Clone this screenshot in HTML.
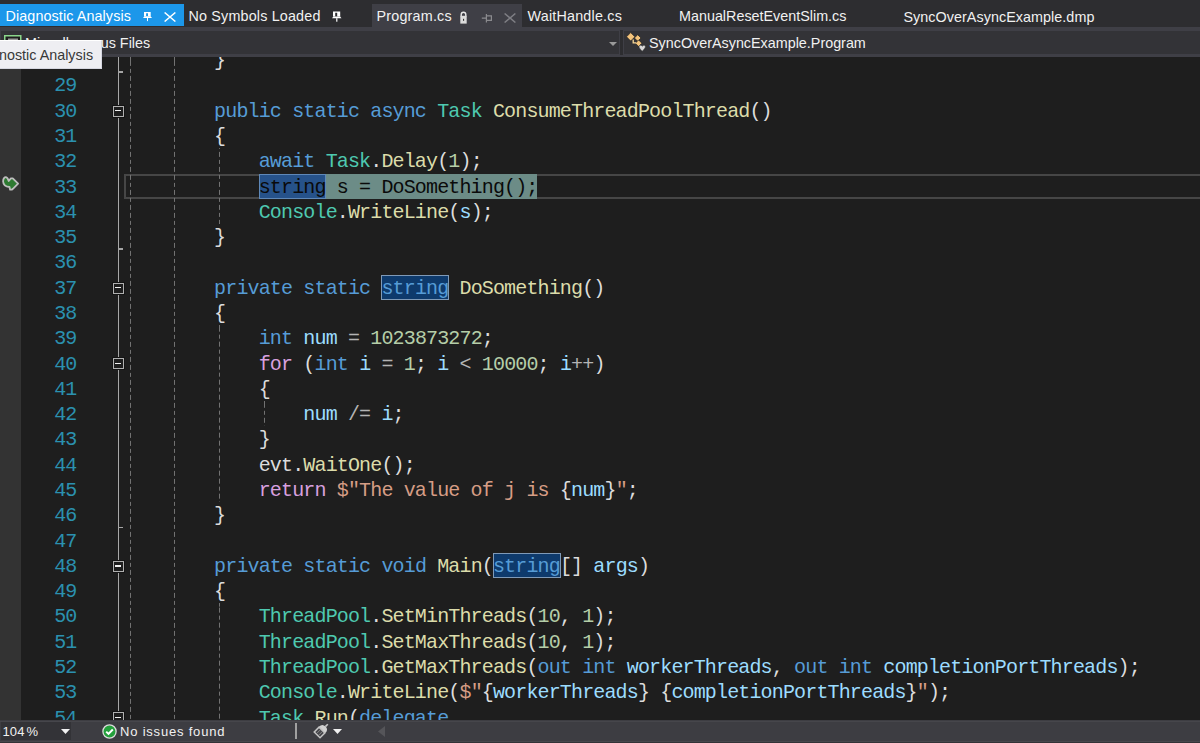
<!DOCTYPE html>
<html><head><meta charset="utf-8">
<style>
html,body{margin:0;padding:0;width:1200px;height:743px;overflow:hidden;background:#2D2D30;font-family:"Liberation Sans",sans-serif;}
.abs{position:absolute}
#tabs{position:absolute;left:0;top:0;width:1200px;height:27px;background:#2D2D30}
.tt{position:absolute;top:8px;font-size:14.35px;color:#F1F1F1;white-space:nowrap;line-height:16px;transform:scaleY(1.07);transform-origin:0 13px}
.st{transform:none}
#nav{position:absolute;left:0;top:27px;width:1200px;height:30px;background:#3F3F46}
#editor{position:absolute;left:0;top:57px;width:1200px;height:663px;background:#1E1E1E;overflow:hidden}
#margin{position:absolute;left:0;top:0;width:21px;height:100%;background:#333333}
#ed{position:absolute;left:0;top:-57px;width:1200px;height:743px}
.ln{position:absolute;left:124.9px;height:25.29px;line-height:25.29px;font-family:"Liberation Mono",monospace;font-size:20px;letter-spacing:-0.85px;white-space:pre;color:#DCDCDC;transform:translateY(1.3px) scaleY(1.04);transform-origin:0 18px}
.num{position:absolute;left:21px;width:55.5px;text-align:right;height:25.29px;line-height:25.29px;font-family:"Liberation Mono",monospace;font-size:20px;letter-spacing:-0.85px;color:#2B91AF;transform:translateY(1.3px) scaleY(1.04);transform-origin:0 18px}
.g{position:absolute;width:1px;background-image:repeating-linear-gradient(to bottom,#727272 0,#727272 4.6px,transparent 4.6px,transparent 7.6px)}
.ov{position:absolute;left:117.6px;width:1.4px;background:#A8A8A8}
.ot{position:absolute;left:118px;width:5px;height:1.5px;background:#A5A5A5}
.ob{position:absolute;left:112.8px;width:11.2px;height:11px;box-sizing:border-box;border:1.5px solid #B0B0B0;background:#1E1E1E;box-shadow:0 0 0 1px #141414}
.ob:after{content:"";position:absolute;left:0.8px;top:3.6px;width:6.4px;height:1.4px;background:#F0F0F0}
#status{position:absolute;left:0;top:720px;width:1200px;height:23px;background:#3D3D42}
</style></head><body>
<div id="tabs">
  <div class="abs" style="left:0;top:4px;width:184px;height:22px;background:#1C97EA"></div>
  <div class="tt" style="left:5.5px;top:7.5px;color:#FFFFFF;letter-spacing:0.1px">Diagnostic Analysis</div>
  <svg class="abs" style="left:142px;top:10px" width="12" height="12" viewBox="0 0 12 12"><path fill-rule="evenodd" d="M2 2H8.7V6.3H2zM4.1 3.2V6.3H6V3.2z" fill="#fff"/><path d="M1.1 7.9L2.2 6.3H8.6L10 7.9z" fill="#fff"/><rect x="5" y="7.9" width="1" height="3.2" fill="#fff"/></svg>
  <svg class="abs" style="left:164px;top:11.5px" width="12" height="10" viewBox="0 0 12 10"><path d="M0.6 0.5L11.4 9.5M11.4 0.5L0.6 9.5" stroke="#fff" stroke-width="1.5" fill="none"/></svg>

  <div class="tt" style="left:188.5px;letter-spacing:0.17px">No Symbols Loaded</div>
  <svg class="abs" style="left:330.7px;top:10px" width="12" height="12" viewBox="0 0 12 12"><path fill-rule="evenodd" d="M2 1.4H9.2V6.4H2zM4.2 2.8V6.4H6.2V2.8z" fill="#fff"/><path d="M1.1 8.2L2.2 6.4H9.1L10.5 8.2z" fill="#fff"/><rect x="5.2" y="8.2" width="1.2" height="3.5" fill="#fff"/></svg>

  <div class="abs" style="left:372px;top:4px;width:150px;height:23px;background:#3F3F46"></div>
  <div class="tt" style="left:376.5px;letter-spacing:0.2px">Program.cs</div>
  <svg class="abs" style="left:459.5px;top:11px" width="7" height="13" viewBox="0 0 7 13"><path d="M1.2 5.5V3.6a2.3 2.3 0 0 1 4.6 0V5.5" stroke="#E8E8E8" stroke-width="1.4" fill="none"/><rect x="0.3" y="4.8" width="6.4" height="7.8" fill="#DCDCDC"/><rect x="3" y="7.8" width="1.1" height="2" fill="#333"/></svg>
  <svg class="abs" style="left:481px;top:13px" width="12" height="10" viewBox="0 0 12 10"><path d="M0.8 5.1H5.2M5.4 1V9.6M5.5 2.9H10.4V7.4H5.5" stroke="#8A8A8E" stroke-width="1.2" fill="none"/></svg>
  <svg class="abs" style="left:504px;top:13px" width="12" height="10" viewBox="0 0 12 10"><path d="M0.6 0.5L11.4 9.5M11.4 0.5L0.6 9.5" stroke="#7E7E84" stroke-width="1.5" fill="none"/></svg>

  <div class="tt" style="left:527.5px;letter-spacing:0.2px">WaitHandle.cs</div>
  <div class="tt" style="left:679px">ManualResetEventSlim.cs</div>
  <div class="tt" style="left:903.5px;top:8.5px;letter-spacing:0.05px">SyncOverAsyncExample.dmp</div>
</div>

<div id="nav">
  <div class="abs" style="left:620px;top:3px;width:3px;height:25px;background:#2D2D30"></div>
  <div class="abs" style="left:1px;top:4px;width:618px;height:23px;background:#333337"></div>
  <div class="abs" style="left:624px;top:4px;width:576px;height:23px;background:#333337"></div>
  <svg class="abs" style="left:4px;top:7.8px" width="18" height="14" viewBox="0 0 18 14"><rect x="0.75" y="0.75" width="16" height="12" fill="#1E1E1E" stroke="#8BD68B" stroke-width="1.5"/><rect x="4" y="3.5" width="10" height="2" fill="#9A9A9A"/></svg>
  <div class="tt" style="left:25px;top:8px">Miscellaneous Files</div>
  <svg class="abs" style="left:609px;top:15px" width="8" height="4" viewBox="0 0 8 4"><path d="M0 0h8L4 4z" fill="#9A9A9A"/></svg>
  <svg class="abs" style="left:622px;top:1px" width="30" height="28" viewBox="0 0 30 28">
    <path d="M4.5 8.8L8.7 4.6 12.9 8.8 8.7 13z" fill="#F4C47C" stroke="#202020" stroke-width="0.7"/>
    <path d="M12.4 10L15.7 6.7 19 10 15.7 13.3z" fill="#F4C47C" stroke="#202020" stroke-width="0.7"/>
    <path d="M13.3 15.2L16.6 11.9 19.9 15.2 16.6 18.5z" fill="#F4C47C" stroke="#202020" stroke-width="0.7"/>
    <path d="M11.2 11.5V14.8H14" stroke="#F8D898" stroke-width="1.3" fill="none"/>
    <path d="M20.2 18.3c-0.8-1.6-3.4-1.4-3.2 0.6 0.2 1.4 1.8 2.6 3.2 4.4 1.4-1.8 3-3 3.2-4.4 0.2-2-2.4-2.2-3.2-0.6z" fill="#D8D8D8" stroke="#2a2a2a" stroke-width="0.5"/>
  </svg>
  <div class="tt" style="left:649px;top:7.5px">SyncOverAsyncExample.Program</div>
</div>

<div id="editor">
  <div id="margin"></div>
  <div id="ed">
<div class="num" style="top:47.05px">28</div>
<div class="num" style="top:72.34px">29</div>
<div class="num" style="top:97.63px">30</div>
<div class="num" style="top:122.92px">31</div>
<div class="num" style="top:148.21px">32</div>
<div class="num" style="top:173.50px">33</div>
<div class="num" style="top:198.79px">34</div>
<div class="num" style="top:224.08px">35</div>
<div class="num" style="top:249.37px">36</div>
<div class="num" style="top:274.66px">37</div>
<div class="num" style="top:299.95px">38</div>
<div class="num" style="top:325.24px">39</div>
<div class="num" style="top:350.53px">40</div>
<div class="num" style="top:375.82px">41</div>
<div class="num" style="top:401.11px">42</div>
<div class="num" style="top:426.40px">43</div>
<div class="num" style="top:451.69px">44</div>
<div class="num" style="top:476.98px">45</div>
<div class="num" style="top:502.27px">46</div>
<div class="num" style="top:527.56px">47</div>
<div class="num" style="top:552.85px">48</div>
<div class="num" style="top:578.14px">49</div>
<div class="num" style="top:603.43px">50</div>
<div class="num" style="top:628.72px">51</div>
<div class="num" style="top:654.01px">52</div>
<div class="num" style="top:679.30px">53</div>
<div class="num" style="top:704.59px">54</div>
<div class="ov" style="top:57px;height:686px"></div>
<div class="ot" style="top:71.3px"></div>
<div class="ot" style="top:248.4px"></div>
<div class="ot" style="top:526.6px"></div>
<div class="ob" style="top:105.5px"></div>
<div class="ob" style="top:282.5px"></div>
<div class="ob" style="top:358.4px"></div>
<div class="ob" style="top:560.7px"></div>
<div class="ob" style="top:712.4px"></div>
<div style="position:absolute;left:124px;top:173.50px;right:-2px;height:25.29px;border:2px solid #464646;box-sizing:border-box"></div>
<div style="position:absolute;left:258.70px;top:173.50px;width:278.75px;height:25.29px;background:#6C8C87;box-sizing:border-box;"></div>
<div style="position:absolute;left:258.70px;top:173.50px;width:66.90px;height:25.29px;background:#26528A;border:1px solid #5F88B8;box-sizing:border-box;"></div>
<div style="position:absolute;left:381.35px;top:274.66px;width:67.79px;height:25.29px;background:#0E3A6C;border:1px solid #7F9AB8;box-sizing:border-box;"></div>
<div style="position:absolute;left:492.85px;top:552.85px;width:67.79px;height:25.29px;background:#0E3A6C;border:1px solid #7F9AB8;box-sizing:border-box;"></div>
<div class="g" style="left:129.9px;top:57.0px;height:672.9px;background-position:0 3.90px"></div>
<div class="g" style="left:173.9px;top:57.0px;height:672.9px;background-position:0 3.90px"></div>
<div class="g" style="left:219.1px;top:148.2px;height:75.9px;background-position:0 3.89px"></div>
<div class="g" style="left:219.1px;top:325.2px;height:177.0px;background-position:0 1.66px"></div>
<div class="g" style="left:219.1px;top:603.4px;height:126.4px;background-position:0 4.67px"></div>
<div class="g" style="left:263.7px;top:401.1px;height:25.3px;background-position:0 1.79px"></div>
<div class="ln" style="top:47.05px"><span style="color:#DCDCDC">        }</span></div>
<div class="ln" style="top:97.63px">        <span style="color:#569CD6">public</span> <span style="color:#569CD6">static</span> <span style="color:#569CD6">async</span> <span style="color:#4EC9B0">Task</span> <span style="color:#DCDCAA">ConsumeThreadPoolThread</span><span style="color:#DCDCDC">()</span></div>
<div class="ln" style="top:122.92px"><span style="color:#DCDCDC">        {</span></div>
<div class="ln" style="top:148.21px">            <span style="color:#569CD6">await</span> <span style="color:#4EC9B0">Task</span><span style="color:#DCDCDC">.</span><span style="color:#DCDCAA">Delay</span><span style="color:#DCDCDC">(</span><span style="color:#B5CEA8">1</span><span style="color:#DCDCDC">);</span></div>
<div class="ln" style="top:173.50px">            <span style="color:#0A0A0A">string s = DoSomething();</span></div>
<div class="ln" style="top:198.79px">            <span style="color:#4EC9B0">Console</span><span style="color:#DCDCDC">.</span><span style="color:#DCDCAA">WriteLine</span><span style="color:#DCDCDC">(</span><span style="color:#9CDCFE">s</span><span style="color:#DCDCDC">);</span></div>
<div class="ln" style="top:224.08px"><span style="color:#DCDCDC">        }</span></div>
<div class="ln" style="top:274.66px">        <span style="color:#569CD6">private</span> <span style="color:#569CD6">static</span> <span style="color:#569CD6">string</span> <span style="color:#DCDCAA">DoSomething</span><span style="color:#DCDCDC">()</span></div>
<div class="ln" style="top:299.95px"><span style="color:#DCDCDC">        {</span></div>
<div class="ln" style="top:325.24px">            <span style="color:#569CD6">int</span> <span style="color:#9CDCFE">num</span> <span style="color:#B4B4B4">=</span> <span style="color:#B5CEA8">1023873272</span><span style="color:#DCDCDC">;</span></div>
<div class="ln" style="top:350.53px">            <span style="color:#D8A0DF">for</span><span style="color:#DCDCDC"> (</span><span style="color:#569CD6">int</span> <span style="color:#9CDCFE">i</span> <span style="color:#B4B4B4">=</span> <span style="color:#B5CEA8">1</span><span style="color:#DCDCDC">; </span><span style="color:#9CDCFE">i</span> <span style="color:#B4B4B4">&lt;</span> <span style="color:#B5CEA8">10000</span><span style="color:#DCDCDC">; </span><span style="color:#9CDCFE">i</span><span style="color:#B4B4B4">++</span><span style="color:#DCDCDC">)</span></div>
<div class="ln" style="top:375.82px"><span style="color:#DCDCDC">            {</span></div>
<div class="ln" style="top:401.11px">                <span style="color:#9CDCFE">num</span> <span style="color:#B4B4B4">/=</span> <span style="color:#9CDCFE">i</span><span style="color:#DCDCDC">;</span></div>
<div class="ln" style="top:426.40px"><span style="color:#DCDCDC">            }</span></div>
<div class="ln" style="top:451.69px">            <span style="color:#DCDCDC">evt</span><span style="color:#DCDCDC">.</span><span style="color:#DCDCAA">WaitOne</span><span style="color:#DCDCDC">();</span></div>
<div class="ln" style="top:476.98px">            <span style="color:#D8A0DF">return</span> <span style="color:#D69D85">$&quot;The value of j is </span><span style="color:#DCDCDC">{</span><span style="color:#9CDCFE">num</span><span style="color:#DCDCDC">}</span><span style="color:#D69D85">&quot;</span><span style="color:#DCDCDC">;</span></div>
<div class="ln" style="top:502.27px"><span style="color:#DCDCDC">        }</span></div>
<div class="ln" style="top:552.85px">        <span style="color:#569CD6">private</span> <span style="color:#569CD6">static</span> <span style="color:#569CD6">void</span> <span style="color:#DCDCAA">Main</span><span style="color:#DCDCDC">(</span><span style="color:#569CD6">string</span><span style="color:#DCDCDC">[] </span><span style="color:#9CDCFE">args</span><span style="color:#DCDCDC">)</span></div>
<div class="ln" style="top:578.14px"><span style="color:#DCDCDC">        {</span></div>
<div class="ln" style="top:603.43px">            <span style="color:#4EC9B0">ThreadPool</span><span style="color:#DCDCDC">.</span><span style="color:#DCDCAA">SetMinThreads</span><span style="color:#DCDCDC">(</span><span style="color:#B5CEA8">10</span><span style="color:#DCDCDC">, </span><span style="color:#B5CEA8">1</span><span style="color:#DCDCDC">);</span></div>
<div class="ln" style="top:628.72px">            <span style="color:#4EC9B0">ThreadPool</span><span style="color:#DCDCDC">.</span><span style="color:#DCDCAA">SetMaxThreads</span><span style="color:#DCDCDC">(</span><span style="color:#B5CEA8">10</span><span style="color:#DCDCDC">, </span><span style="color:#B5CEA8">1</span><span style="color:#DCDCDC">);</span></div>
<div class="ln" style="top:654.01px">            <span style="color:#4EC9B0">ThreadPool</span><span style="color:#DCDCDC">.</span><span style="color:#DCDCAA">GetMaxThreads</span><span style="color:#DCDCDC">(</span><span style="color:#569CD6">out</span> <span style="color:#569CD6">int</span> <span style="color:#9CDCFE">workerThreads</span><span style="color:#DCDCDC">, </span><span style="color:#569CD6">out</span> <span style="color:#569CD6">int</span> <span style="color:#9CDCFE">completionPortThreads</span><span style="color:#DCDCDC">);</span></div>
<div class="ln" style="top:679.30px">            <span style="color:#4EC9B0">Console</span><span style="color:#DCDCDC">.</span><span style="color:#DCDCAA">WriteLine</span><span style="color:#DCDCDC">(</span><span style="color:#D69D85">$&quot;</span><span style="color:#DCDCDC">{</span><span style="color:#9CDCFE">workerThreads</span><span style="color:#DCDCDC">}</span> <span style="color:#DCDCDC">{</span><span style="color:#9CDCFE">completionPortThreads</span><span style="color:#DCDCDC">}</span><span style="color:#D69D85">&quot;</span><span style="color:#DCDCDC">);</span></div>
<div class="ln" style="top:704.59px">            <span style="color:#4EC9B0">Task</span><span style="color:#DCDCDC">.</span><span style="color:#DCDCAA">Run</span><span style="color:#DCDCDC">(</span><span style="color:#569CD6">delegate</span></div>
  </div>
  <svg class="abs" style="left:0;top:115px" width="22" height="22" viewBox="0 172 22 22"><path d="M3.1 181.2C3.2 178.3 4.5 177.1 6 177.2C7.3 177.4 7.9 178.6 8.7 181L10.9 178.4H12.8L18.1 183.6L12.9 188.8L11.8 189.7H10.1L9.5 187C6.5 186.8 3.3 185.5 3.1 181.2Z" fill="#2E7A32" stroke="#BEBEBE" stroke-width="1.8" stroke-linejoin="round"/></svg>
</div>

<div class="abs" style="left:-1px;top:40.3px;width:102.5px;height:28.7px;background:#EEEEF2;border:1px solid #D6D7E0;border-top-color:#FFFFFF;box-sizing:border-box"></div>
<div class="tt" style="left:-9px;top:47px;color:#383838;font-size:14.35px">gnostic Analysis</div>

<div id="status">
  <div class="abs" style="left:0;top:0.6px;width:1200px;height:1px;background:#46464B"></div>
  <div class="abs" style="left:0;top:21px;width:1200px;height:1px;background:#47474C"></div>
  <div class="abs" style="left:0;top:22px;width:1200px;height:1px;background:#333337"></div>
  <div class="abs" style="left:1px;top:2px;width:70px;height:18px;background:#333337"></div>
  <div class="tt st" style="left:2.5px;top:4px;font-size:13px;letter-spacing:0.1px">104</div><div class="tt st" style="left:26.5px;top:4px;font-size:13px">%</div>
  <svg class="abs" style="left:61px;top:9px" width="9" height="5" viewBox="0 0 9 5"><path d="M0 0h9L4.5 5z" fill="#F1F1F1"/></svg>
  <svg class="abs" style="left:101.5px;top:4px" width="15" height="15" viewBox="0 0 15 15"><circle cx="7.5" cy="7.5" r="6.6" fill="#24A03C" stroke="#DCDCDC" stroke-width="1.3"/><path d="M4.2 7.6l2.3 2.3 4.3-4.4" stroke="#fff" stroke-width="2" fill="none"/></svg>
  <div class="tt st" style="left:120px;top:4px;font-size:13px;letter-spacing:0.8px">No issues found</div>
  <div class="abs" style="left:295px;top:3px;width:1.5px;height:16px;background:#A0A0A0"></div>
  <svg class="abs" style="left:312px;top:0.7px" width="19" height="19" viewBox="0 0 19 19"><g transform="rotate(45 9.5 9.5)"><path d="M9.5 0.6V4" stroke="#C8C8C8" stroke-width="1.6"/><path d="M5 8.6Q5 3.8 9.5 3.8Q14 3.8 14 8.6Z" fill="#D2D2D2"/><rect x="5.4" y="8.9" width="8.2" height="6.8" fill="#45454A" stroke="#C4C4C4" stroke-width="1.5"/><path d="M8.2 10V14.6M10.8 10V14.6" stroke="#888" stroke-width="0.9"/></g></svg>
  <svg class="abs" style="left:333px;top:9px" width="9" height="5" viewBox="0 0 9 5"><path d="M0 0h9L4.5 5z" fill="#F1F1F1"/></svg>
  <svg class="abs" style="left:378px;top:6px" width="8" height="11" viewBox="0 0 8 11"><path d="M7 0v11L0 5.5z" fill="#555559"/></svg>
</div>
</body></html>
